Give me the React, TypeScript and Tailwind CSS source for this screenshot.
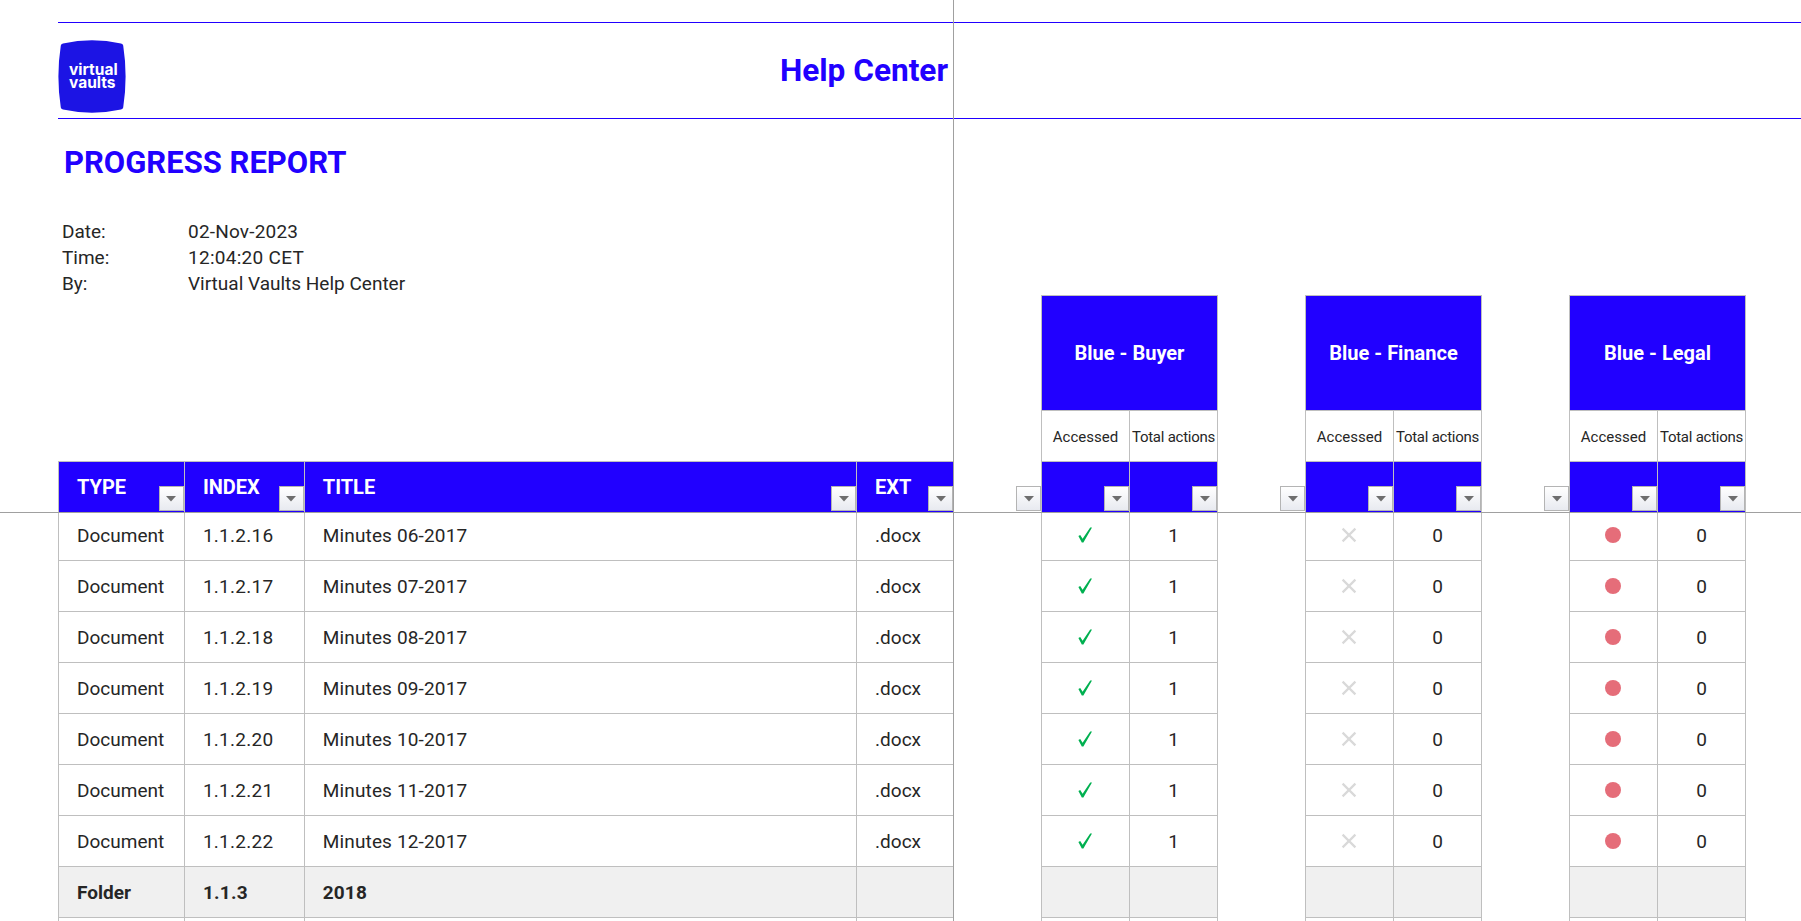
const BLUE = "bg-[#2100ff]";

type Row = { type: string; index: string; title: string; ext: string; folder?: boolean; h: string; pad: string; markPad: string };

const doc = (index: string, title: string, first?: boolean): Row => ({
  type: "Document",
  index,
  title,
  ext: ".docx",
  h: first ? "h-[48px]" : "h-[51px]",
  pad: first ? "" : "pt-[2px]",
  markPad: first ? "pb-[3px]" : "",
});

const rows: Row[] = [
  doc("1.1.2.16", "Minutes 06-2017", true),
  doc("1.1.2.17", "Minutes 07-2017"),
  doc("1.1.2.18", "Minutes 08-2017"),
  doc("1.1.2.19", "Minutes 09-2017"),
  doc("1.1.2.20", "Minutes 10-2017"),
  doc("1.1.2.21", "Minutes 11-2017"),
  doc("1.1.2.22", "Minutes 12-2017"),
  { type: "Folder", index: "1.1.3", title: "2018", ext: "", folder: true, h: "h-[51px]", pad: "pt-[2px]", markPad: "" },
  { type: "", index: "", title: "", ext: "", h: "h-[51px]", pad: "", markPad: "" },
];

function FilterButton() {
  return (
    <span className="absolute right-0 bottom-[1px] flex h-[25px] w-[25px] items-center justify-center border border-[#b4b4b4] bg-gradient-to-b from-white to-[#e8eaf0]">
      <svg width="10" height="6" viewBox="0 0 10 6">
        <polygon points="0,0 10,0 5,5.5" fill="#6e6e6e" />
      </svg>
    </span>
  );
}

function Check() {
  return (
    <svg width="16" height="16" viewBox="0 0 16 16">
      <path d="M1.4 9 L3.2 8 L5.6 11.8 L13.2 0.5 L15 0.5 L6.4 15.5 L4.8 15.5 Z" fill="#00b050" />
    </svg>
  );
}

function Cross() {
  return (
    <svg width="16" height="16" viewBox="0 0 16 16">
      <path d="M1.6 1.6 L14.4 14.4 M14.4 1.6 L1.6 14.4" stroke="#d9d9d9" strokeWidth="2.2" fill="none" />
    </svg>
  );
}

function Dot() {
  return <span className="block h-4 w-4 rounded-full bg-[#e56d79]" />;
}

function HeaderCell({ label, width, last }: { label: string; width: string; last?: boolean }) {
  return (
    <div
      className={`relative flex h-full items-start pt-[12px] pl-[18px] text-[20px] leading-[26px] font-bold text-white ${BLUE} ${width} ${
        last ? "" : "border-r border-[#bfbfbf]"
      }`}
    >
      {label}
      <FilterButton />
    </div>
  );
}

function BodyCell({ children, className }: { children?: React.ReactNode; className: string }) {
  return <div className={`flex h-full items-center pl-[18px] ${className}`}>{children}</div>;
}

function LeftPane() {
  return (
    <div className="flex w-[954px] shrink-0 flex-col border-r border-[#a0a0a0]">
      <div className="flex h-[513px] shrink-0 flex-col border-b border-[#a0a0a0] pt-[22px] pl-[58px]">
        <div className="flex h-[97px] shrink-0 items-center justify-between border-t border-b border-[#2100ff] pr-[5px]">
          <div className="relative mt-[12px] h-[73px] w-[68px]">
            <svg width="68" height="73" viewBox="0 0 68 73" className="block">
              <path
                d="M5 3.4 Q34 -3 63 3.4 Q65 3.8 65.2 5.5 Q70 36.5 65.2 67.5 Q65 69.2 63 69.6 Q34 76 5 69.6 Q3 69.2 2.8 67.5 Q-2 36.5 2.8 5.5 Q3 3.8 5 3.4 Z"
                fill="#1c14e4"
              />
            </svg>
            <div className="absolute top-[23px] left-[11px] font-['Inter',sans-serif] text-[15.5px] leading-[13px] font-bold text-white">
              virtual
              <br />
              vaults
            </div>
          </div>
          <div className="text-[31.6px] leading-[36px] font-bold text-[#2100ff]">Help Center</div>
        </div>
        <h1 className="mt-[26px] ml-[6px] text-[31px] leading-[36px] font-bold text-[#2100ff]">PROGRESS REPORT</h1>
        <div className="mt-[38px] ml-[4px] grid grid-cols-[126px_1fr] text-[19px] leading-[26px] text-[#262626]">
          <span>Date:</span>
          <span className="tracking-[0.2px]">02-Nov-2023</span>
          <span>Time:</span>
          <span className="tracking-[0.28px]">12:04:20 CET</span>
          <span>By:</span>
          <span>Virtual Vaults Help Center</span>
        </div>
        <div className="mt-auto flex h-[51px] shrink-0 border-t border-l border-[#bfbfbf]">
          <HeaderCell label="TYPE" width="w-[126px]" />
          <HeaderCell label="INDEX" width="w-[120px]" />
          <HeaderCell label="TITLE" width="w-[553px]" />
          <HeaderCell label="EXT" width="w-[96px]" last />
        </div>
      </div>
      <div className="shrink-0 pl-[58px] text-[19px] text-[#262626]">
        {rows.map((r, i) => (
          <div
            key={i}
            className={`flex border-b border-l border-[#bfbfbf] ${r.h} ${r.folder ? "bg-[#f0f0f0] font-bold" : ""}`}
          >
            <BodyCell className={`w-[126px] border-r border-[#bfbfbf] ${r.pad}`}>{r.type}</BodyCell>
            <BodyCell className={`w-[120px] border-r border-[#bfbfbf] tracking-[0.28px] ${r.pad}`}>{r.index}</BodyCell>
            <BodyCell className={`w-[553px] border-r border-[#bfbfbf] tracking-[0.15px] ${r.pad}`}>{r.title}</BodyCell>
            <BodyCell className={`w-[96px] ${r.pad}`}>{r.ext}</BodyCell>
          </div>
        ))}
      </div>
    </div>
  );
}

const groups: { name: string; total: string; mark: React.ReactNode }[] = [
  { name: "Blue - Buyer", total: "1", mark: <Check /> },
  { name: "Blue - Finance", total: "0", mark: <Cross /> },
  { name: "Blue - Legal", total: "0", mark: <Dot /> },
];

function GroupHeader({ name }: { name: string }) {
  return (
    <>
      <div className="relative w-[87px] shrink-0">
        <FilterButton />
      </div>
      <div className="w-[177px] shrink-0 border-t border-l border-[#bfbfbf]">
        <div className={`flex h-[115px] items-center justify-center border-r border-b border-[#bfbfbf] text-[20px] font-bold text-white ${BLUE}`}>
          {name}
        </div>
        <div className="flex h-[51px] border-b border-[#bfbfbf] text-[15px] text-[#262626]">
          <div className="flex w-[88px] items-center justify-center border-r border-[#bfbfbf] pt-[2px]">Accessed</div>
          <div className="flex w-[88px] items-center justify-center border-r border-[#bfbfbf] pt-[2px] tracking-[-0.25px]">Total actions</div>
        </div>
        <div className={`flex h-[50px] ${BLUE}`}>
          <div className="relative w-[88px] border-r border-[#bfbfbf]">
            <FilterButton />
          </div>
          <div className="relative w-[88px] border-r border-[#bfbfbf]">
            <FilterButton />
          </div>
        </div>
      </div>
    </>
  );
}

function RightPane() {
  return (
    <div className="flex min-w-0 flex-1 flex-col">
      <div className="flex h-[513px] shrink-0 flex-col border-b border-[#a0a0a0] pt-[22px]">
        <div className="h-[97px] shrink-0 border-t border-b border-[#2100ff]" />
        <div className="mt-auto flex">
          {groups.map((g) => (
            <GroupHeader key={g.name} name={g.name} />
          ))}
        </div>
      </div>
      <div className="shrink-0 text-[19px] text-[#262626]">
        {rows.map((r, i) => (
          <div key={i} className={`flex ${r.h}`}>
            {groups.map((g) => (
              <div key={g.name} className="flex h-full">
                <div className="w-[87px] shrink-0" />
                <div className={`flex h-full w-[177px] shrink-0 border-b border-l border-[#bfbfbf] ${r.folder ? "bg-[#f0f0f0]" : ""}`}>
                  <div className={`flex w-[88px] items-center justify-center border-r border-[#bfbfbf] pr-[1px] ${r.markPad}`}>
                    {r.folder || !r.type ? null : g.mark}
                  </div>
                  <div className={`flex w-[88px] items-center justify-center border-r border-[#bfbfbf] ${r.pad}`}>
                    {r.folder || !r.type ? null : g.total}
                  </div>
                </div>
              </div>
            ))}
          </div>
        ))}
      </div>
    </div>
  );
}

export default function App() {
  return (
    <div className="flex h-[921px] w-[1801px] overflow-hidden bg-white font-['Roboto',sans-serif]">
      <LeftPane />
      <RightPane />
    </div>
  );
}
